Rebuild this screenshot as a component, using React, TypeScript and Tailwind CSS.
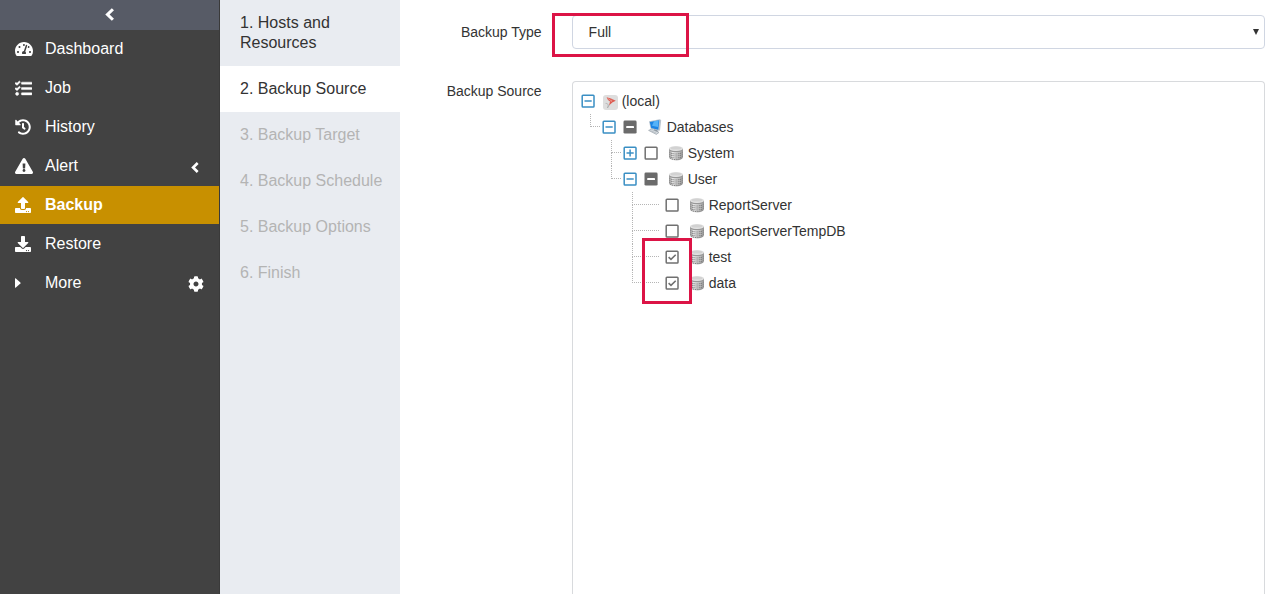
import React from "react";
import {
  FaTachometerAlt,
  FaTasks,
  FaHistory,
  FaExclamationTriangle,
  FaUpload,
  FaDownload,
  FaCog,
} from "react-icons/fa";

type CheckState = "none" | "empty" | "partial" | "checked";
type IconKind = "server" | "monitor" | "disk";

interface TreeRow {
  label: string;
  toggle: "plus" | "minus" | null;
  check: CheckState;
  icon: IconKind;
  guides: ("branch" | "last" | "blank")[];
}

const rows: TreeRow[] = [
  { label: "(local)", toggle: "minus", check: "none", icon: "server", guides: [] },
  { label: "Databases", toggle: "minus", check: "partial", icon: "monitor", guides: ["last"] },
  { label: "System", toggle: "plus", check: "empty", icon: "disk", guides: ["blank", "branch"] },
  { label: "User", toggle: "minus", check: "partial", icon: "disk", guides: ["blank", "last"] },
  { label: "ReportServer", toggle: null, check: "empty", icon: "disk", guides: ["blank", "blank", "branch"] },
  { label: "ReportServerTempDB", toggle: null, check: "empty", icon: "disk", guides: ["blank", "blank", "branch"] },
  { label: "test", toggle: null, check: "checked", icon: "disk", guides: ["blank", "blank", "branch"] },
  { label: "data", toggle: null, check: "checked", icon: "disk", guides: ["blank", "blank", "last"] },
];

function Chevron({ className, size }: { className?: string; size: number }) {
  return (
    <svg className={className} width={size * 0.72} height={size} viewBox="0 0 9 12.5" fill="none" stroke="currentColor" strokeWidth="3">
      <path d="M7.6 1.2L2.4 6.25L7.6 11.3" strokeLinejoin="miter" />
    </svg>
  );
}

function Caret() {
  return (
    <svg width="6" height="10" viewBox="0 0 6 10" fill="currentColor">
      <path d="M0 0.6V9.4Q0.3 10 0.9 9.6L5.4 5.5Q5.8 5 5.4 4.5L0.9 0.4Q0.3 0 0 0.6Z" />
    </svg>
  );
}

const navItems = [
  { label: "Dashboard", icon: <FaTachometerAlt size={18} /> },
  { label: "Job", icon: <FaTasks size={17} stroke="currentColor" strokeWidth={14} /> },
  { label: "History", icon: <FaHistory size={16} /> },
  { label: "Alert", icon: <FaExclamationTriangle size={18} />, extra: <Chevron size={11} className="mt-0.5 mr-[5px]" /> },
  { label: "Backup", icon: <FaUpload size={16} />, active: true },
  { label: "Restore", icon: <FaDownload size={16} /> },
  { label: "More", icon: <Caret />, extra: <FaCog size={16} className="mt-px" /> },
];

const steps = [
  { label: "1. Hosts and Resources", style: "text-[#333]" },
  { label: "2. Backup Source", style: "bg-white text-[#333]" },
  { label: "3. Backup Target", style: "text-[#b4b4b4]" },
  { label: "4. Backup Schedule", style: "text-[#b4b4b4]" },
  { label: "5. Backup Options", style: "text-[#b4b4b4]" },
  { label: "6. Finish", style: "text-[#b4b4b4]" },
];

function Toggle({ kind }: { kind: "plus" | "minus" }) {
  return (
    <svg width="14" height="14" viewBox="0 0 14 14" fill="none" stroke="#3a8fc4" strokeWidth="1.5">
      <rect x="1.2" y="1.2" width="11.8" height="11.8" rx="0.8" />
      <path d="M3.5 7H10.7" />
      {kind === "plus" && <path d="M7.1 3.5V10.6" />}
    </svg>
  );
}

function Check({ state }: { state: CheckState }) {
  if (state === "partial") {
    return (
      <svg width="14" height="14" viewBox="0 0 14 14">
        <rect x="0.5" y="0.6" width="13.1" height="13" rx="1.4" fill="#6b6b6b" />
        <rect x="3.2" y="6" width="7.8" height="2.1" rx="0.4" fill="#fff" />
      </svg>
    );
  }
  return (
    <svg width="14" height="14" viewBox="0 0 14 14" fill="none" stroke="#707070" strokeWidth="1.5">
      <rect x="1.2" y="1.2" width="11.8" height="11.8" rx="0.8" />
      {state === "checked" && <path d="M3.6 7.1L6 9.4L10.7 4.8" strokeWidth="1.6" />}
    </svg>
  );
}

function ServerIcon() {
  return (
    <svg width="15" height="15" viewBox="0 0 15 15">
      <rect width="15" height="15" rx="3" fill="#dedede" />
      <path d="M3.6 2.2L8 3.4L12.8 5.8L9.6 7.2L6 10.6L7 6.6L5 5Z" fill="#dc5b50" />
      <path d="M4.8 3.4L8 5.6M9 4.6L8 7" stroke="#f1bbb3" strokeWidth="0.6" fill="none" />
      <path d="M2.6 8.4C5 8.2 6 10 4.3 12.8M6.2 10L4.6 13" stroke="#a3a3a3" strokeWidth="0.7" fill="none" />
    </svg>
  );
}

function MonitorIcon() {
  return (
    <svg width="16" height="16" viewBox="0 0 16 16">
      <path d="M2 2.2L12.6 0.2L14.2 1L13 11.4L11.4 11.8L3.6 9.8Z" fill="#b9c4ce" />
      <path d="M2.8 2.9L12.3 1.3L11.3 10.7L4.2 9.1Z" fill="#1c83e4" />
      <path d="M7 2.3L11.6 1.5L10.9 8L5 6.8Z" fill="#55b2f8" />
      <path d="M6.8 10.3L10.3 11.2L11.4 13L7.6 12.6Z" fill="#8d969e" />
      <path d="M1.6 11.4L4.2 10.2L12 13.4L9.4 15.4Z" fill="#dce1e5" stroke="#98a2ab" strokeWidth="0.7" />
      <path d="M3.4 11.5L9.6 14.2" stroke="#a4adb5" strokeWidth="0.6" />
    </svg>
  );
}

function DiskIcon() {
  return (
    <svg width="16" height="16" viewBox="0 0 16 16">
      <defs>
        <linearGradient id="disk" x1="0" x2="1">
          <stop offset="0" stopColor="#a0a0a0" />
          <stop offset="0.3" stopColor="#f4f4f4" />
          <stop offset="0.6" stopColor="#d4d4d4" />
          <stop offset="1" stopColor="#999" />
        </linearGradient>
      </defs>
      <path d="M1 3.3V12C1 16.6 15 16.6 15 12V3.3Z" fill="url(#disk)" />
      <path
        d="M1.4 7.2C4 9.6 12 9.6 14.6 7.2M1.4 9.2C4 11.6 12 11.6 14.6 9.2M1.4 11.2C4 13.6 12 13.6 14.6 11.2M2.2 13C5 15.2 11 15.2 13.8 13"
        stroke="#777"
        strokeWidth="1"
        strokeDasharray="1.4 0.7"
        fill="none"
      />
      <path d="M1 3.8V5.2C3 8 13 8 15 5.2V3.8C13 6.4 3 6.4 1 3.8Z" fill="#989898" />
      <ellipse cx="8" cy="3.5" rx="7" ry="2.6" fill="#e2e2e2" />
      <ellipse cx="8" cy="3" rx="5.6" ry="1.6" fill="#d2d2d2" />
    </svg>
  );
}

function TreeItem({ row }: { row: TreeRow }) {
  const leaf = row.toggle === null;
  return (
    <li className="flex h-[26px] items-center">
      {row.guides.map((guide, i) => (
        <span key={i} className="flex h-full w-[21px] shrink-0 flex-col pl-3">
          {guide !== "blank" && (
            <>
              <span
                className={
                  leaf
                    ? "h-[13px] w-[27px] shrink-0 border-b border-l border-dotted border-[#b5b5b5]"
                    : "h-[13px] w-[10px] shrink-0 border-b border-l border-dotted border-[#b5b5b5]"
                }
              />
              {guide === "branch" && <span className="h-[13px] w-px border-l border-dotted border-[#b5b5b5]" />}
            </>
          )}
        </span>
      ))}
      <span className="flex w-[21px] shrink-0 pl-[3px]">{row.toggle && <Toggle kind={row.toggle} />}</span>
      {row.check !== "none" && (
        <span className="flex w-[21px] shrink-0 pl-[3px]">
          <Check state={row.check} />
        </span>
      )}
      <span className={row.icon === "server" ? "mt-[3px] ml-1 shrink-0" : "ml-1.5 shrink-0"}>
        {row.icon === "server" && <ServerIcon />}
        {row.icon === "monitor" && <MonitorIcon />}
        {row.icon === "disk" && <DiskIcon />}
      </span>
      <span className="ml-[3.7px] leading-5">{row.label}</span>
    </li>
  );
}

export default function App() {
  return (
    <div className="relative flex h-screen overflow-hidden bg-white font-['Liberation_Sans',Arial,sans-serif] text-[#333]">
      <aside className="w-[220px] shrink-0 border-r border-[#3a3a3a] bg-[#424242] text-white">
        <div className="flex h-[30px] items-center justify-center bg-[#575b66] pb-px">
          <Chevron size={13} />
        </div>
        <nav className="flex flex-col gap-px">
          {navItems.map((item) => (
            <a
              key={item.label}
              className={
                item.active
                  ? "flex h-[38px] items-center bg-[#c89000] px-[15px] font-bold"
                  : "flex h-[38px] items-center px-[15px]"
              }
            >
              <span className="w-[30px] shrink-0">{item.icon}</span>
              <span className="grow text-base leading-5">{item.label}</span>
              {item.extra}
            </a>
          ))}
        </nav>
      </aside>

      <ol className="w-[180px] shrink-0 bg-[#e9ecf1] text-base leading-5">
        {steps.map((step) => (
          <li key={step.label} className={`py-[13px] pr-4 pl-5 ${step.style}`}>
            {step.label}
          </li>
        ))}
      </ol>

      <main className="flex grow flex-col gap-8 pt-[15px] pr-[15px] text-sm">
        <div className="flex shrink-0">
          <label className="w-[172px] shrink-0 pt-[7px] pr-[30.4px] text-right leading-5">Backup Type</label>
          <div className="flex h-[34px] grow items-center justify-between rounded border border-[#d0d6e2] pr-[5px] pl-[15.6px]">
            <span className="leading-5">Full</span>
            <svg width="6" height="6" viewBox="0 0 6 6">
              <path d="M0 0H6L3 6Z" fill="#333" />
            </svg>
          </div>
        </div>
        <div className="flex grow">
          <label className="w-[172px] shrink-0 pr-[30.4px] text-right leading-5">Backup Source</label>
          <ul className="grow rounded-t border border-b-0 border-[#d8dadd] pt-1.5 pl-[5px]">
            {rows.map((row) => (
              <TreeItem key={row.label} row={row} />
            ))}
          </ul>
        </div>
      </main>

      <div className="absolute top-[13px] left-[552px] h-11 w-[137px] border-3 border-[#dc1446]" />
      <div className="absolute top-[238px] left-[642px] h-[66px] w-[50px] border-3 border-[#dc1446]" />
    </div>
  );
}
